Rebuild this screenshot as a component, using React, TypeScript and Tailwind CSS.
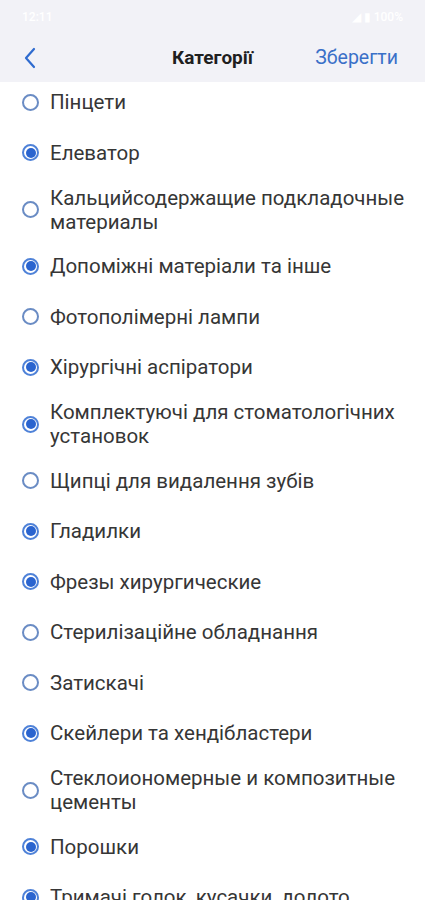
import React from "react";

const items: [string, boolean][] = [
  ["Пінцети", false],
  ["Елеватор", true],
  ["Кальцийсодержащие подкладочные материалы", false],
  ["Допоміжні матеріали та інше", true],
  ["Фотополімерні лампи", false],
  ["Хірургічні аспіратори", true],
  ["Комплектуючі для стоматологічних установок", true],
  ["Щипці для видалення зубів", false],
  ["Гладилки", true],
  ["Фрезы хирургические", true],
  ["Стерилізаційне обладнання", false],
  ["Затискачі", false],
  ["Скейлери та хендібластери", true],
  ["Стеклоиономерные и композитные цементы", false],
  ["Порошки", true],
  ["Тримачі голок, кусачки, долото", true],
];

function Radio({ checked }: { checked: boolean }) {
  return checked ? (
    <div className="w-[17px] h-[17px] shrink-0 rounded-full border-2 border-[#4f82d8] flex items-center justify-center">
      <div className="w-[10px] h-[10px] rounded-full bg-[#2a64cf]" />
    </div>
  ) : (
    <div className="w-[17px] h-[17px] shrink-0 rounded-full border-2 border-[#6a8cc4]" />
  );
}

export default function App() {
  return (
    <div className="w-[425px] h-[900px] overflow-hidden bg-white" style={{ fontFamily: "Roboto, 'Noto Sans', sans-serif" }}>
      <div className="h-[82px] bg-[#f2f2f7] flex flex-col">
        <div className="h-[34px] flex items-center justify-between px-[22px] text-white text-[12px] font-medium">
          <span>12:11</span>
          <span>◢ ▮ 100%</span>
        </div>
        <div className="h-[48px] grid grid-cols-[1fr_auto_1fr] items-center">
          <div className="pl-[23px] flex items-center">
            <svg width="14" height="22" viewBox="0 0 14 22" fill="none">
              <polyline points="11,2 3,11 11,20" stroke="#2f6bcf" strokeWidth="2.2" strokeLinecap="round" strokeLinejoin="round" />
            </svg>
          </div>
          <div className="text-[19px] font-bold text-[#1f1f1f]">Категорії</div>
          <div className="flex justify-end pr-[27px] text-[19.5px] text-[#3a70c8]">Зберегти</div>
        </div>
      </div>
      <div className="h-[818px] overflow-hidden">
        <div className="-mt-[5px]">
          {items.map(([label, checked], i) => (
            <div key={i} className="flex items-center min-h-[50.5px] py-[7.5px] pl-[22px] pr-[10px] gap-[11px]">
              <Radio checked={checked} />
              <div className="text-[20.5px] leading-[24px] text-[#363636]">{label}</div>
            </div>
          ))}
        </div>
      </div>
    </div>
  );
}
